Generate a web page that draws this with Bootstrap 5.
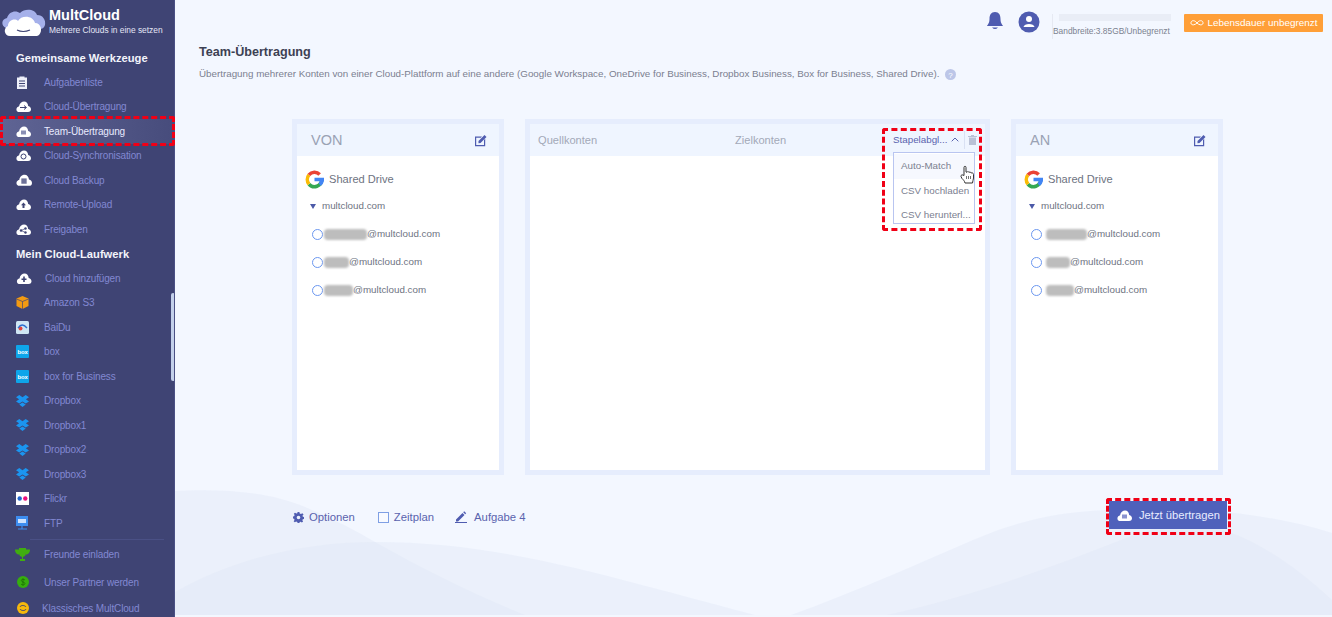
<!DOCTYPE html>
<html lang="de"><head><meta charset="utf-8"><title>MultCloud</title>
<link href="https://cdn.jsdelivr.net/npm/bootstrap@5.3.0/dist/css/bootstrap.min.css" rel="stylesheet">
<style>
html,body{height:617px;overflow:hidden}
body{font-family:"Liberation Sans",Arial,sans-serif;background:#f3f7ff;color:#6b7280;width:1332px;position:relative}
.shell{height:617px}
.side{width:175px;flex:none;background:#3f4474;height:617px;position:relative;border-right:1px solid #4a5084;overflow:hidden}
.brand{height:45.5px;position:relative}
.brand svg{position:absolute;left:1px;top:6px}
.brand-name{position:absolute;left:49px;top:6px;font-size:14.5px;font-weight:700;color:#fff;line-height:18px}
.brand-sub{position:absolute;left:49px;top:24px;font-size:8.4px;color:#e4e6f6;line-height:13px;white-space:nowrap}
.side-h{font-size:11.2px;font-weight:700;color:#f3f4fb;padding-left:16px;height:24.5px;line-height:24.5px;white-space:nowrap}
.side-i{height:24.5px;display:flex;align-items:center;font-size:10px;letter-spacing:-.15px;color:#8288d2;white-space:nowrap;padding-left:16px}
.side-i .ic{width:28px;flex:none;display:flex;align-items:center}
.side-i.on{background:linear-gradient(90deg,#5f6494,#474c7c);color:#e8eaff}
.side-s{border-top:1px solid #4a5085;margin:3.5px 10px 0 30px}
.bar{position:absolute;left:171px;top:293px;width:4px;height:88px;background:#c3d0ea;border-radius:2px}
.work{flex:1;position:relative;overflow:hidden;min-width:0}
.waves{position:absolute;left:0;bottom:2px;pointer-events:none}
.top{height:38px;position:relative;display:flex;justify-content:flex-end;align-items:flex-start;padding-top:7px;padding-right:9px}
.quota{width:118px;margin:7px 14px 0 12px;font-size:8.4px;color:#7c8290;white-space:nowrap;border-left:1px solid #e6e9f2;height:25px}
.quota-b{height:7px;background:#e9edf6;margin-left:6px;width:112px}
.quota-t{margin-top:4px;margin-left:0;line-height:12px}
.life{background:#ff9f38;color:#fff;font-size:9.9px;height:18px;width:139px;border-radius:1px;margin-top:7px;display:flex;align-items:center;justify-content:center;gap:4px;white-space:nowrap}
.ttl{font-size:12.6px;font-weight:700;color:#3d4153;margin:6px 0 0 24px;line-height:16px}
.sub{font-size:9.8px;color:#7b8090;margin:7px 0 0 24px;line-height:14px;white-space:nowrap;display:flex;align-items:center;gap:6px}
.cols{display:flex;gap:21px;margin:38px 0 0 117px;position:relative}
.pane{height:356px;border:5px solid #e6edfd;background:#fff;flex:none}
.pane-s{width:212px}
.pane-m{width:465px}
.pane-h{height:32px;background:#eff5ff;display:flex;align-items:center;justify-content:space-between;padding:1px 12px 0 14px;font-size:14.5px;color:#9aa2b4}
.drv{display:flex;align-items:center;gap:5px;padding:7px 0 0 8px;font-size:11.1px;color:#6e737f;height:39px}
.dom{font-size:9.8px;color:#6e737f;display:flex;align-items:center;gap:6px;padding-left:13px;margin-top:3px;height:16px}
.tri{width:0;height:0;border:3.5px solid transparent;border-top:5px solid #4c5aa8;border-bottom:0;display:inline-block}
.accs{margin-top:6px}
.acc{font-size:9.8px;color:#6e737f;display:flex;align-items:center;height:28px;padding-left:15px}
.rad{width:11px;height:11px;border:1px solid #6b97f0;border-radius:50%;background:#fff;flex:none;margin-right:1px}
.blur{height:11px;background:#bdbdbd;border-radius:4px;filter:blur(1.2px);flex:none}
.m-h{height:32px;background:#eff5ff;position:relative;font-size:11.1px;color:#a3a9b8}
.m-h span{position:absolute;top:9px;line-height:14px}
.m-sep{position:absolute;left:434px;top:7px;height:18px;border-left:1px solid #d9e1f3}
.menu{position:absolute;left:363px;top:28px;width:82px;height:72px;background:#fff;border:1px solid #b9c5f0;z-index:2;font-size:9.8px;color:#7b8090;white-space:nowrap;overflow:hidden;padding-top:1px}
.menu div{height:24.5px;line-height:24.5px;padding-left:7px}
.menu div:first-child{background:#f6f8fe}
.bot{position:relative;height:40px;margin:22px 0 0 118px;display:flex;align-items:center;font-size:11.3px;color:#5a63ae}
.bot-i{display:flex;align-items:center;gap:5px}
.chk{width:11px;height:11px;border:1px solid #7f9fe4;background:#f8faff;display:inline-block}
.go{position:absolute;left:816px;top:4px;width:118px;height:28px;background:#4f61bb;color:#e9ecff;font-size:11.2px;display:flex;align-items:center;gap:7px;padding-left:8px;white-space:nowrap}
.mark-r{position:absolute;border:3px dashed #f00016;border-radius:3px;pointer-events:none;z-index:5}
.mr1{left:0;top:116px;width:175px;height:30px}
.mr2{left:882px;top:128px;width:100px;height:103px}
.mr3{left:1106px;top:498px;width:125px;height:37px}
.hand{position:absolute;left:960px;top:165px;z-index:6}
</style></head>
<body>
<div class="d-flex shell">
<aside class="side">
 <div class="brand">
  <svg width="46" height="32" viewBox="0 0 46 32"><path d="M5 22C0 20 0 13 6 12 8 5 15 4 19 7 24 2 34 3 36 9 42 9 45 14 44 19 43 22 41 23 39 23Z" fill="#a5b0ea"/><path d="M9 30C3 30 2 22 7 20 7 14 14 12 17 15 20 9 32 9 34 17 40 17 42 25 38 29 37 30 35 30 34 30Z" fill="#fff"/><path d="M16 24Q22 27 29 24" stroke="#3f4474" stroke-width="1.2" fill="none"/></svg>
  <div class="brand-name">MultCloud</div><div class="brand-sub">Mehrere Clouds in eine setzen</div>
 </div>
 <div class="side-h">Gemeinsame Werkzeuge</div>
 <div class="side-i"><span class="ic"><svg width="12" height="13" viewBox="0 0 12 13"><path d="M1 1.500H3.500V.5H8.500V1.500H11V13H1Z" fill="#eef0fa"/><path d="M3 5H9M3 7.500H9M3 10H9" stroke="#3f4474"/></svg></span>Aufgabenliste</div>
 <div class="side-i"><span class="ic"><svg width="15" height="11" viewBox="0 0 15 11"><use href="#cl"/><path d="M4 6.500H10M8 4.500L10.500 6.500 8 8.500" stroke="#3f4474" fill="none"/></svg></span>Cloud-Übertragung</div>
 <div class="side-i on"><span class="ic"><svg width="15" height="11" viewBox="0 0 15 11"><use href="#cl"/><rect x="5" y="4.500" width="5" height="4" fill="#8a8fb5"/></svg></span>Team-Übertragung</div>
 <div class="side-i"><span class="ic"><svg width="15" height="11" viewBox="0 0 15 11"><use href="#cl"/><circle cx="7.500" cy="6.500" r="2.500" fill="none" stroke="#3f4474"/></svg></span>Cloud-Synchronisation</div>
 <div class="side-i"><span class="ic"><svg width="16" height="12" viewBox="0 0 15 11"><use href="#cl"/><rect x="5" y="4" width="5" height="5" fill="#6d7198"/></svg></span>Cloud Backup</div>
 <div class="side-i"><span class="ic"><svg width="15" height="11" viewBox="0 0 15 11"><use href="#cl"/><path d="M7.500 3.500L10 6.200H8.500V9H6.500V6.200H5Z" fill="#3f4474"/></svg></span>Remote-Upload</div>
 <div class="side-i"><span class="ic"><svg width="15" height="11" viewBox="0 0 15 11"><use href="#cl"/><circle cx="5" cy="6.500" r="1.200" fill="#3f4474"/><circle cx="9.500" cy="4.500" r="1.200" fill="#3f4474"/><circle cx="9.500" cy="8.500" r="1.200" fill="#3f4474"/><path d="M5 6.500L9.500 4.500M5 6.500L9.500 8.500" stroke="#3f4474" stroke-width=".7"/></svg></span>Freigaben</div>
 <div class="side-h">Mein Cloud-Laufwerk</div>
 <div class="side-i"><span class="ic" style="width:29px"><svg width="16" height="11" viewBox="0 0 15 11"><use href="#cl"/><path d="M7.500 3.500V9M5 6.200H10" stroke="#3f4474" stroke-width="1.600"/></svg></span>Cloud hinzufügen</div>
 <div class="side-i"><span class="ic"><svg width="13" height="13" viewBox="0 0 13 13"><path d="M6.500 0L12.500 2.500V10L6.500 13 .5 10V2.500Z" fill="#f39a12"/><path d="M.5 3L6.500 5.500 12.500 3M6.500 5.500V13" stroke="#3f4474" stroke-width=".7" fill="none"/></svg></span>Amazon S3</div>
 <div class="side-i"><span class="ic"><svg width="13" height="13" viewBox="0 0 13 13"><rect width="13" height="13" rx="1.500" fill="#cfe6f4"/><circle cx="4.500" cy="7.500" r="2" fill="#e5453d"/><path d="M2 7Q6 1 11 7" stroke="#2d6fd0" stroke-width="1.300" fill="none"/></svg></span>BaiDu</div>
 <div class="side-i"><span class="ic"><svg width="13" height="13" viewBox="0 0 13 13"><use href="#bx"/></svg></span>box</div>
 <div class="side-i"><span class="ic"><svg width="13" height="13" viewBox="0 0 13 13"><use href="#bx"/></svg></span>box for Business</div>
 <div class="side-i"><span class="ic"><svg width="13" height="12" viewBox="0 0 13 12"><use href="#db"/></svg></span>Dropbox</div>
 <div class="side-i"><span class="ic"><svg width="13" height="12" viewBox="0 0 13 12"><use href="#db"/></svg></span>Dropbox1</div>
 <div class="side-i"><span class="ic"><svg width="13" height="12" viewBox="0 0 13 12"><use href="#db"/></svg></span>Dropbox2</div>
 <div class="side-i"><span class="ic"><svg width="13" height="12" viewBox="0 0 13 12"><use href="#db"/></svg></span>Dropbox3</div>
 <div class="side-i"><span class="ic"><svg width="13" height="13" viewBox="0 0 13 13"><rect width="13" height="13" fill="#fff"/><circle cx="3.700" cy="6.500" r="2.200" fill="#2167cf"/><circle cx="9.300" cy="6.500" r="2.200" fill="#ef0f7c"/></svg></span>Flickr</div>
 <div class="side-i"><span class="ic"><svg width="13" height="14" viewBox="0 0 13 14"><rect y="0" width="12" height="10" fill="#3d8df0"/><rect x="2" y="3" width="8" height="4" fill="#cfe3ff"/><path d="M6 10V12.500M2 13H11" stroke="#3d8df0" stroke-width="1.200"/></svg></span>FTP</div>
 <div class="side-s"></div>
 <div class="side-i" style="height:28px;padding-left:15px"><span class="ic" style="width:29px"><svg width="15" height="13" viewBox="0 0 15 13"><path d="M4 0H11V5C11 8 9 8.500 8 9V11H10V13H5V11H7V9C6 8.500 4 8 4 5ZM4 1.500H0C0 5 2 6.500 4 6.500ZM11 1.500H15C15 5 13 6.500 11 6.500Z" fill="#40ad10"/></svg></span>Freunde einladen</div>
 <div class="side-i" style="height:28px;padding-left:17px"><span class="ic" style="width:27px"><svg width="12" height="12" viewBox="0 0 12 12"><circle cx="6" cy="6" r="6" fill="#36ae0e"/><path d="M8 4C7 3 4 3 4.300 4.700S8 6 8 7.500 5 9.500 4 8M6 2.300V9.700" stroke="#1d6d06" stroke-width=".8" fill="none"/></svg></span>Unser Partner werden</div>
 <div class="side-i" style="height:24px;padding-left:17px"><span class="ic" style="width:25px"><svg width="12" height="12" viewBox="0 0 12 12"><circle cx="6" cy="6" r="6" fill="#f6b80c"/><path d="M3 5C3.500 3 8 3 9 5M9 7C8.500 9 4 9 3 7" stroke="#3f4474" fill="none"/></svg></span>Klassisches MultCloud</div>
 <div class="bar"></div>
</aside>
<main class="work">
 <svg class="waves" width="1157" height="126" viewBox="0 19 1157 126"><g fill="#dfe7f5" fill-opacity=".42"><path d="M0 21C40 19 90 20 130 37 160 50 180 60 200 72 250 100 300 125 350 145H0Z"/><path d="M0 122C60 88 130 72 200 72 270 72 330 82 400 98 470 115 530 132 580 145H0Z"/><path d="M616 145C680 122 740 95 798 70 840 52 880 42 931 40 990 38 1070 36 1157 63V145Z"/><path d="M712 145C790 128 870 100 946 70 990 52 1020 50 1054 62 1090 75 1125 100 1157 130V145Z"/></g></svg>
 <div class="top">
  <svg width="18" height="20" viewBox="0 0 18 20" class="mt-1" style="margin-right:14px"><path d="M9 1C5 1 3.500 4 3.500 8 3.500 12 2 13 1 15H17C16 13 14.500 12 14.500 8 14.500 4 13 1 9 1Z" fill="#4f5cb0"/><path d="M6 16.500Q9 19.500 12 16.500Z" fill="#4f5cb0"/></svg>
  <svg width="22" height="22" viewBox="0 0 22 22" class="mt-1"><circle cx="11" cy="11" r="10.500" fill="#4f5cb0"/><circle cx="11" cy="8" r="3" fill="#fff"/><path d="M5.500 16C6 12 16 12 16.500 16Z" fill="#fff"/></svg>
  <div class="quota"><div class="quota-b"></div><div class="quota-t">Bandbreite:3.85GB/Unbegrenzt</div></div>
  <div class="life"><svg width="14" height="8" viewBox="0 0 14 8"><path d="M7 4C5 1 1.500 1 1 3.500S4 7 7 4C9 1 12.500 1 13 3.500S10 7 7 4Z" stroke="#fff" fill="none"/></svg>Lebensdauer unbegrenzt</div>
 </div>
 <div class="ttl">Team-Übertragung</div>
 <div class="sub">Übertragung mehrerer Konten von einer Cloud-Plattform auf eine andere (Google Workspace, OneDrive for Business, Dropbox Business, Box for Business, Shared Drive).<svg width="11" height="11" viewBox="0 0 11 11"><circle cx="5.500" cy="5.500" r="5.500" fill="#bcc6e8"/><text x="5.500" y="8.500" font-size="8" text-anchor="middle" fill="#fff" font-family="Liberation Sans">?</text></svg></div>
 <div class="cols">
  <section class="pane pane-s">
   <div class="pane-h">VON<svg width="13" height="13" viewBox="0 0 13 13"><use href="#ed"/></svg></div>
   <div class="drv"><svg width="19" height="19" viewBox="0 0 48 48"><use href="#gg"/></svg>Shared Drive</div>
   <div class="dom"><i class="tri"></i>multcloud.com</div>
   <div class="accs"><div class="acc"><i class="rad"></i><i class="blur" style="width:43px"></i>@multcloud.com</div>
   <div class="acc"><i class="rad"></i><i class="blur" style="width:25px"></i>@multcloud.com</div>
   <div class="acc"><i class="rad"></i><i class="blur" style="width:29px"></i>@multcloud.com</div></div>
  </section>
  <section class="pane pane-m position-relative">
   <div class="m-h"><span style="left:8px">Quellkonten</span><span style="left:205px">Zielkonten</span><span style="left:363px;color:#5a63ae;font-size:9.8px">Stapelabgl...</span>
    <svg class="position-absolute" style="left:421px;top:13px" width="8" height="5" viewBox="0 0 8 5"><path d="M.7 4.300L4 1 7.300 4.300" stroke="#5a63ae" fill="none"/></svg>
    <i class="m-sep"></i>
    <svg class="position-absolute" style="left:438px;top:11px" width="9" height="10" viewBox="0 0 9 10"><path d="M1 2.500H8V10H1ZM0 1H9V2H0ZM3 0H6V1H3Z" fill="#b9c1d6"/></svg></div>
   <div class="menu"><div>Auto-Match</div><div>CSV hochladen</div><div>CSV herunterl...</div></div>
  </section>
  <section class="pane pane-s">
   <div class="pane-h">AN<svg width="13" height="13" viewBox="0 0 13 13"><use href="#ed"/></svg></div>
   <div class="drv"><svg width="19" height="19" viewBox="0 0 48 48"><use href="#gg"/></svg>Shared Drive</div>
   <div class="dom"><i class="tri"></i>multcloud.com</div>
   <div class="accs"><div class="acc"><i class="rad"></i><i class="blur" style="margin-left:3px;width:41px"></i>@multcloud.com</div>
   <div class="acc"><i class="rad"></i><i class="blur" style="margin-left:3px;width:24px"></i>@multcloud.com</div>
   <div class="acc"><i class="rad"></i><i class="blur" style="margin-left:3px;width:28px"></i>@multcloud.com</div></div>
  </section>
 </div>
 <div class="bot">
  <div class="bot-i"><svg width="11" height="11" viewBox="0 0 12 12"><path d="M5 0H7L7.300 1.700 8.700 2.300 10.200 1.300 11.500 2.800 10.300 4.200 10.800 5.200 12 5.500V7.500L10.700 7.800 10.200 9 11 10.400 9.700 11.500 8.300 10.500 7.300 11 7 12H5L4.700 10.800 3.400 10.300 2 11.300.7 10 1.700 8.600 1.200 7.400 0 7V5L1.200 4.700 1.800 3.400.9 2 2.200.8 3.600 1.700 4.700 1.300ZM6 4A2 2 0 1 0 6 8 2 2 0 1 0 6 4Z" fill="#4f5cb0" fill-rule="evenodd"/></svg>Optionen</div>
  <div class="bot-i" style="margin-left:23px"><i class="chk"></i>Zeitplan</div>
  <div class="bot-i" style="margin-left:21px;gap:7px"><svg width="12" height="12" viewBox="0 0 12 12"><path d="M1 8.500L7.500 2 9.500 4 3 10.500H1ZM8.200 1.300L9.200.3 11.200 2.300 10.200 3.300Z" fill="#4f5cb0"/><path d="M0 11.500H12" stroke="#4f5cb0"/></svg>Aufgabe 4</div>
  <div class="go"><svg width="15" height="11" viewBox="0 0 15 11"><use href="#cl"/><rect x="5" y="4.500" width="5" height="4" fill="#8a93cf"/></svg>Jetzt übertragen</div>
 </div>
</main>
</div>
<span class="mark-r mr1"></span><span class="mark-r mr2"></span><span class="mark-r mr3"></span>
<svg class="hand" width="15" height="19" viewBox="0 0 15 19"><path d="M4 10V2.500C4 .8 6 .8 6 2.500V7L7 7.200C7.500 6.300 8.700 6.500 9 7.400 9.700 6.800 10.800 7.100 11 8 12 7.600 13.500 8 13.500 9.500V13C13.500 15 12.500 16 12.500 18H5C4.500 16 3.500 15 2 13.500L1 11.500C.5 10 2.500 9.300 4 10.500Z" fill="#fff" stroke="#333"/><path d="M6.500 11V14M8.500 11V14M10.500 11V14" stroke="#333" stroke-width=".7"/></svg>
<svg width="0" height="0" style="position:absolute"><defs>
<path id="cl" d="M3 11C.5 11 0 8.500.8 7 1.300 6 2.300 5.500 3 5.500 3.500 2 6 .5 8 .5 10.500.5 12 2.500 12.200 5 14 5.200 15 6.800 15 8.200 15 9.800 14 11 12 11Z" fill="#fff"/>
<g id="bx"><rect width="13" height="13" rx="1" fill="#0ea5ea"/><text x="6.500" y="8.800" font-size="6" text-anchor="middle" fill="#fff" font-family="Liberation Sans" font-weight="700">box</text></g>
<path id="db" d="M3.300 0L6.500 2.200 9.700 0 13 2.200 9.900 4.300 13 6.500 9.700 8.600 6.500 6.500 3.300 8.600 0 6.500 3.100 4.300 0 2.200ZM3.300 9.400L6.500 7.500 9.700 9.400 6.500 12Z" fill="#1b95f0"/>
<g id="ed"><path d="M1 2.500H8L6.800 3.700H2.200V11H10V6L11.200 4.800V12.200H1Z" fill="#4f5cb0"/><path d="M4.500 7L10.500 1 12.500 3 6.500 9 4.500 9.300Z" fill="#4f5cb0"/></g>
<g id="gg" fill="none" stroke-width="9"><path d="M42 24A18 18 0 0 1 10 35.500" stroke="#34a853"/><path d="M10 35.500A18 18 0 0 1 10 12.500" stroke="#fbbc05"/><path d="M10 12.500A18 18 0 0 1 37 11.500" stroke="#ea4335"/><path d="M24 24H44A18 18 0 0 1 37 37" stroke="#4285f4"/></g>
</defs></svg>
<script src="https://cdn.jsdelivr.net/npm/bootstrap@5.3.0/dist/js/bootstrap.bundle.min.js"></script>
</body></html>
